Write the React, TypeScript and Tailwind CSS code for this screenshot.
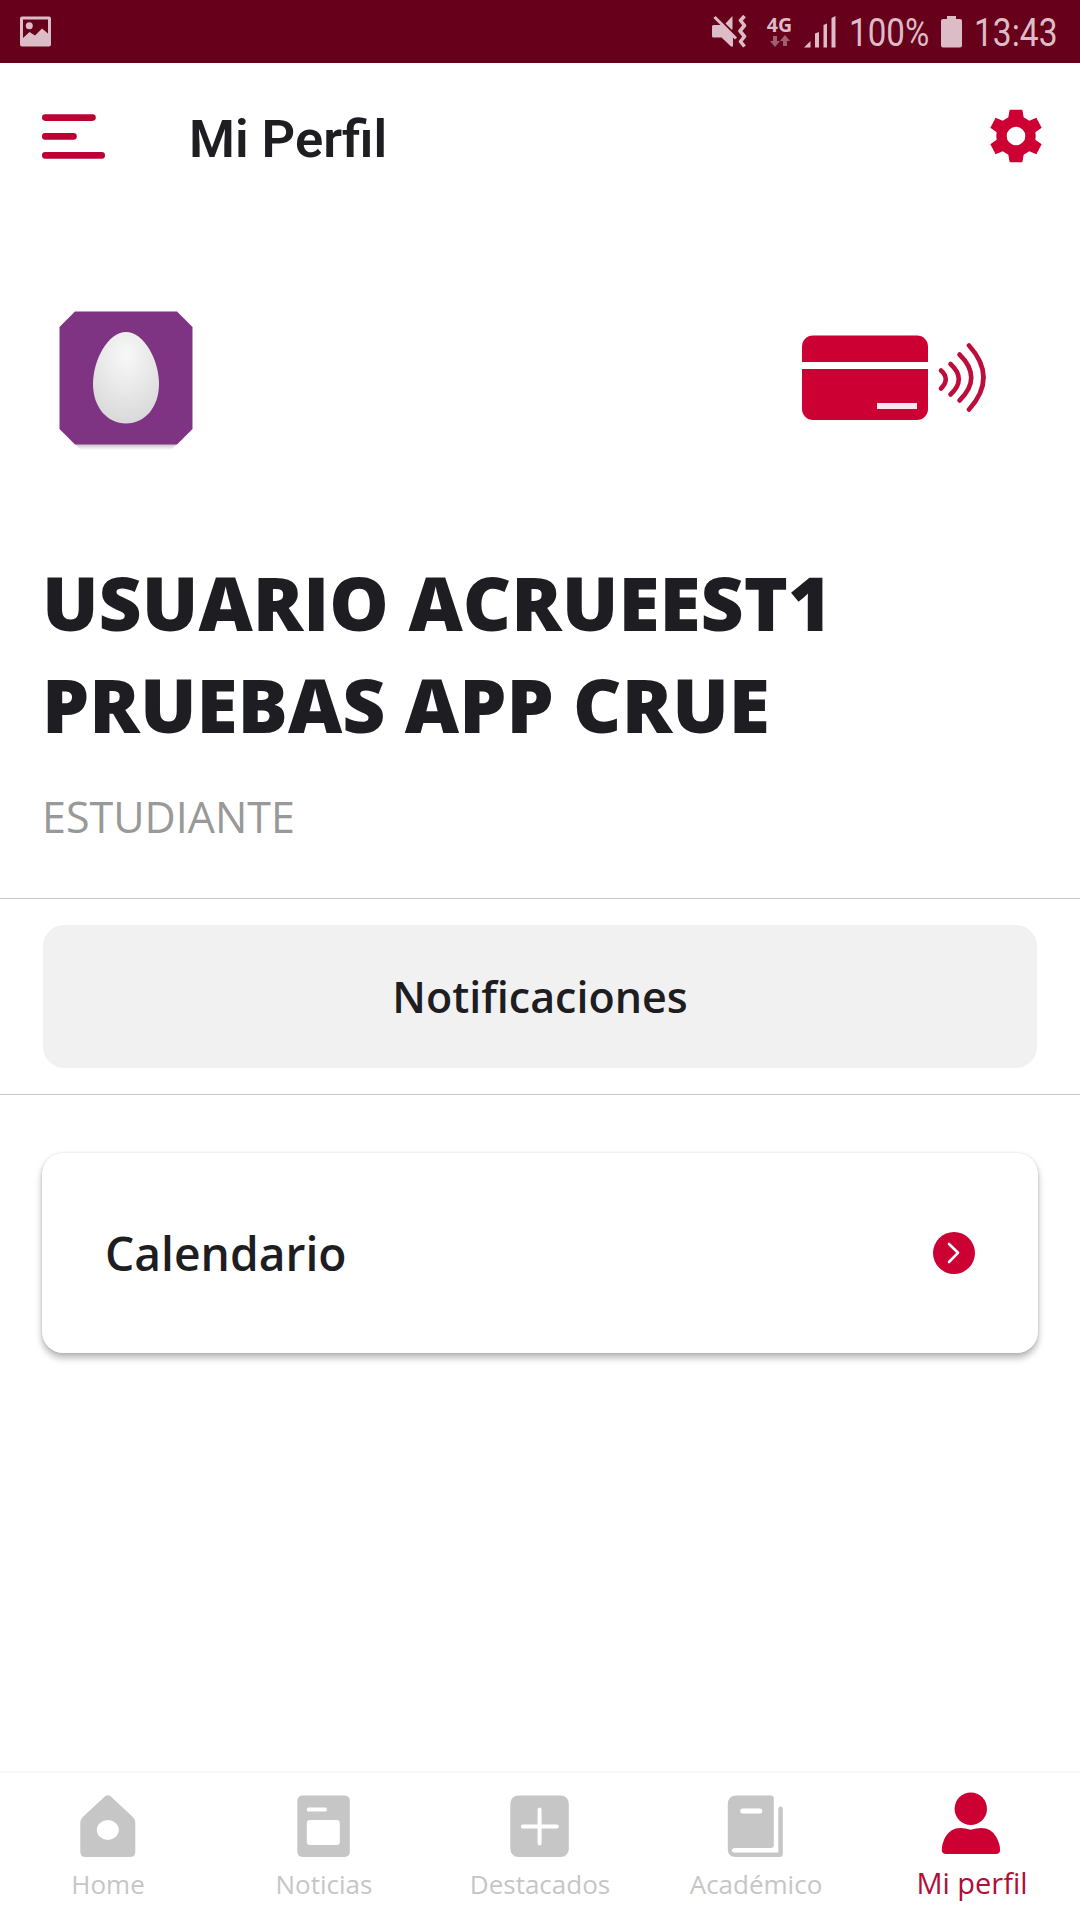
import type { ReactNode } from "react";

const RED = "#cc0033";

function StatusBar() {
    return (
        <div className="flex h-[63px] items-center bg-[#67001a] pl-5 pr-[22px] text-[#dcbcc6]">
            {/* Screenshot notification */}
            <svg width="31" height="31" viewBox="0 0 31 31" className="shrink-0">
                <path fill="currentColor" fillRule="evenodd" d="M2 0.500H29Q31 0.500 31 2.500V28.500Q31 30.500 29 30.500H2Q0 30.500 0 28.500V2.500Q0 0.500 2 0.500ZM3 3.500V22L9.500 16L15 19.500L22 12.500L28 17.500V3.500Z" />
                <circle cx="9.300" cy="9.700" r="3.500" fill="currentColor" />
            </svg>

            <div className="ml-auto flex items-center">
                {/* Muted / vibrate */}
                <svg width="35" height="34" viewBox="0 0 35 34" className="mr-5">
                    <path fill="currentColor" d="M0 11.500Q0 10 1.500 10H8L10 9L21 20V31.500H19L9.500 22.500H1.500Q0 22.500 0 21ZM13.500 8.500L20.500 1V14.500H19.500Z" />
                    <path d="M2.500 2L24 23.500" stroke="currentColor" strokeWidth="3" />
                    <path d="M32.500 1L28.500 5.500L32.500 10.500L28 16L32.500 21.500L28.500 26.500L32.500 31.500" fill="none" stroke="currentColor" strokeWidth="3.600" strokeLinejoin="round" />
                </svg>

                {/* Network type */}
                <div className="mr-3 flex h-[34px] w-[25px] flex-col items-center">
                    <span className="font-['Open_Sans',sans-serif] text-[19.500px] font-bold leading-[20px]">4G</span>
                    <svg width="20" height="12" viewBox="0 0 20 12" className="opacity-50">
                        <path fill="currentColor" d="M3 1H7V6H10L5 12L0 6H3ZM13 11H17V6H20L15 0L10 6H13Z" />
                    </svg>
                </div>

                {/* Signal */}
                <svg width="32" height="32" viewBox="0 0 32 32" className="mr-[13px]">
                    <path fill="currentColor" d="M0 31.500L6.500 25V31.500ZM11 17.500L15 16V31.500H11ZM19.500 9L23 7.500V31.500H19.500ZM27.500 2L31.500 0V31.500H27.500Z" />
                </svg>

                <div className="mr-3 w-[80px] whitespace-nowrap pt-1 font-[Roboto,sans-serif] text-[39px] leading-[59px]">
                    <span className="inline-block origin-left scale-x-[0.85]">100%</span>
                </div>

                {/* Battery */}
                <svg width="21" height="32" viewBox="0 0 21 32" className="mr-3">
                    <path fill="currentColor" d="M6 0H15V3H19Q21 3 21 5V29.500Q21 31.500 19 31.500H2Q0 31.500 0 29.500V5Q0 3 2 3H6Z" />
                </svg>

                <div className="w-[84px] whitespace-nowrap pt-1 font-[Roboto,sans-serif] text-[39px] leading-[59px]">
                    <span className="inline-block origin-left scale-x-[0.86]">13:43</span>
                </div>
            </div>
        </div>
    );
}

function Header() {
    return (
        <header className="flex h-[145px] items-center px-[38px]">
            <button className="ml-1">
                <svg width="63" height="46" viewBox="0 0 63 46" fill="none" stroke="#bd0033" strokeWidth="6.600" strokeLinecap="round">
                    <path d="M3.300 4.600H50.500M3.300 23.400H31.500M3.300 42.400H59.700" />
                </svg>
            </button>
            <h1 className="ml-[84px] pt-[6px] font-[Roboto,sans-serif] text-[52.500px] font-semibold leading-[64px] text-[#1d1d22]">Mi Perfil</h1>
            <button className="ml-auto">
                <svg width="52" height="54" viewBox="-78 -81 156 162">
                    <path
                        fill={RED}
                        fillRule="evenodd"
                        d="M-19 -79H19L23 -56L40 -46L61 -55L77 -25L58 -11Q60 0 58 11L77 25L61 55L40 46L23 56L19 79H-19L-23 56L-40 46L-61 55L-77 25L-58 11Q-60 0 -58 -11L-77 -25L-61 -55L-40 -46L-23 -56ZM0 -28A28 28 0 1 0 0 28A28 28 0 1 0 0 -28Z"
                    />
                </svg>
            </button>
        </header>
    );
}

function Avatar() {
    return (
        <svg width="134" height="140" viewBox="0 0 134 140">
            <defs>
                <radialGradient id="egg" cx="0.5" cy="0.25" r="0.75">
                    <stop offset="0" stopColor="#f8f8f8" />
                    <stop offset="0.500" stopColor="#e9e9e9" />
                    <stop offset="1" stopColor="#d9d9d9" />
                </radialGradient>
                <linearGradient id="avatarShadow" x1="0" y1="0" x2="0" y2="1">
                    <stop offset="0" stopColor="#c4bfc8" />
                    <stop offset="1" stopColor="#ffffff" />
                </linearGradient>
            </defs>
            <path fill="url(#avatarShadow)" d="M16 133H118L112 139H22Z" />
            <path fill="#7e3483" d="M16 0.500H118L133.500 16V118L118 133.500H16L0.500 118V16Z" />
            <path fill="url(#egg)" d="M67 21C85 21 100 49 100 73C100 96 86 112.500 67 112.500C48 112.500 34 96 34 73C34 49 49 21 67 21Z" />
        </svg>
    );
}

function ContactlessCard() {
    return (
        <svg width="186" height="86" viewBox="0 0 186 86">
            <rect y="0.500" width="126" height="84.500" rx="11" fill={RED} />
            <rect y="27" width="126" height="7" fill="#fff" />
            <rect x="75" y="68" width="40" height="6" fill="#ffe6ee" />
            <g fill="none" stroke="#bd0d3b" strokeWidth="4.600" strokeLinecap="round">
                <path d="M139 35.500Q148.500 44 139 53.500" />
                <path d="M148.500 29Q165 44 148.500 59.500" />
                <path d="M157.500 19.500Q181 42.500 157.500 65.500" />
                <path d="M167 10.500Q196 42.500 167 74.500" />
            </g>
        </svg>
    );
}

function NavItem({ label, active, children }: { label: string; active?: boolean; children: ReactNode }) {
    return (
        <a className={`flex flex-1 flex-col items-center ${active ? "text-[#cc0033]" : "text-[#c6c6c6]"}`}>
            <svg width="66" height="70" viewBox="0.2 0 66 70" fill="currentColor" className="mt-[15px]">
                {children}
            </svg>
            <span className={active ? "text-[29px] leading-[50px] text-[#b30d38]" : "text-[26px] leading-[53px]"}>{label}</span>
        </a>
    );
}

function BottomNav() {
    return (
        <nav className="mt-auto flex h-[149px] border-t-2 border-[#f7f7f7]">
            <NavItem label="Home">
                <path fillRule="evenodd" d="M30 8.500Q33 6 36 8.500L58 29Q60.500 31.500 60.500 35V63.500Q60.500 69 55 69H11Q5.500 69 5.500 63.500V35Q5.500 31.500 8 29ZM33 32A11 10 0 1 0 33 52A11 10 0 1 0 33 32Z" />
            </NavItem>
            <NavItem label="Noticias">
                <rect x="6.500" y="7.500" width="52.500" height="61.500" rx="5" />
                <rect x="16" y="19.500" width="20" height="4" rx="1.500" fill="#fff" />
                <rect x="16" y="32" width="33" height="25" rx="3" fill="#fff" />
            </NavItem>
            <NavItem label="Destacados">
                <rect x="3.500" y="7.500" width="58.500" height="61.500" rx="8" />
                <path d="M16 38.500H50M32.800 21.500V55.500" stroke="#fff" strokeWidth="4" strokeLinecap="round" />
            </NavItem>
            <NavItem label="Académico">
                <path d="M14 7.500H48Q51 7.500 51 10.500V57Q51 60 48 60H12Q9 60 9 62.500Q9 64.500 12 64.500H55.500V21Q55.500 18.500 58 18.500Q60 18.500 60 21V66Q60 69 57 69H13Q5 69 5 61V16.500Q5 7.500 14 7.500Z" />
                <rect x="17.500" y="20.500" width="22" height="5" rx="2.500" fill="#fff" />
            </NavItem>
            <NavItem label="Mi perfil" active>
                <circle cx="32" cy="20.700" r="16.200" />
                <path d="M21.500 40Q26.500 40 32 41.700Q37.500 40 42.500 40Q52.500 40 57.500 49Q61.300 56 61.300 62Q61.300 66 57 66H7.500Q3 66 3 62Q3 56 6.500 49Q12 40 21.500 40Z" />
            </NavItem>
        </nav>
    );
}

export default function App() {
    return (
        <div className="flex h-[1920px] w-[1080px] flex-col overflow-hidden bg-white font-['Open_Sans',sans-serif] text-[#1d1d22]">
            <StatusBar />
            <Header />

            {/* Profile */}
            <section className="flex h-[690px] flex-col px-[42px]">
                <div className="mt-[103px] flex h-[140px] items-center justify-between pl-[17px] pr-[50px]">
                    <Avatar />
                    <div className="-mt-[6px]">
                        <ContactlessCard />
                    </div>
                </div>
                <h2 className="mt-[100px] text-[74.800px] font-extrabold leading-[102px]">
                    USUARIO ACRUEEST1
                    <br />
                    PRUEBAS APP CRUE
                </h2>
                <p className="mt-8 text-[43px] leading-[60px] text-[#999999]">ESTUDIANTE</p>
            </section>

            {/* Notifications */}
            <section className="border-y border-[#c8c8c8] px-[43px] py-[26px]">
                <button className="h-[143px] w-full rounded-[21px] bg-[#f1f1f1] pt-[2px] text-[43px] font-semibold">Notificaciones</button>
            </section>

            {/* Calendar */}
            <section className="px-[42px] pt-[58px]">
                <div className="flex h-[200px] items-center justify-between rounded-[21px] pl-[63px] pr-[63px] shadow-[0_5px_7px_rgba(0,0,0,0.28),0_0_3px_rgba(0,0,0,0.12)]">
                    <span className="pt-[2px] text-[46.200px] font-semibold">Calendario</span>
                    <svg width="42" height="42" viewBox="0 0 42 42">
                        <circle cx="21" cy="21" r="21" fill={RED} />
                        <path d="M16 12L25 20.800L16 30" fill="none" stroke="#fff" strokeWidth="2.600" strokeLinecap="round" strokeLinejoin="round" />
                    </svg>
                </div>
            </section>

            <BottomNav />
        </div>
    );
}
